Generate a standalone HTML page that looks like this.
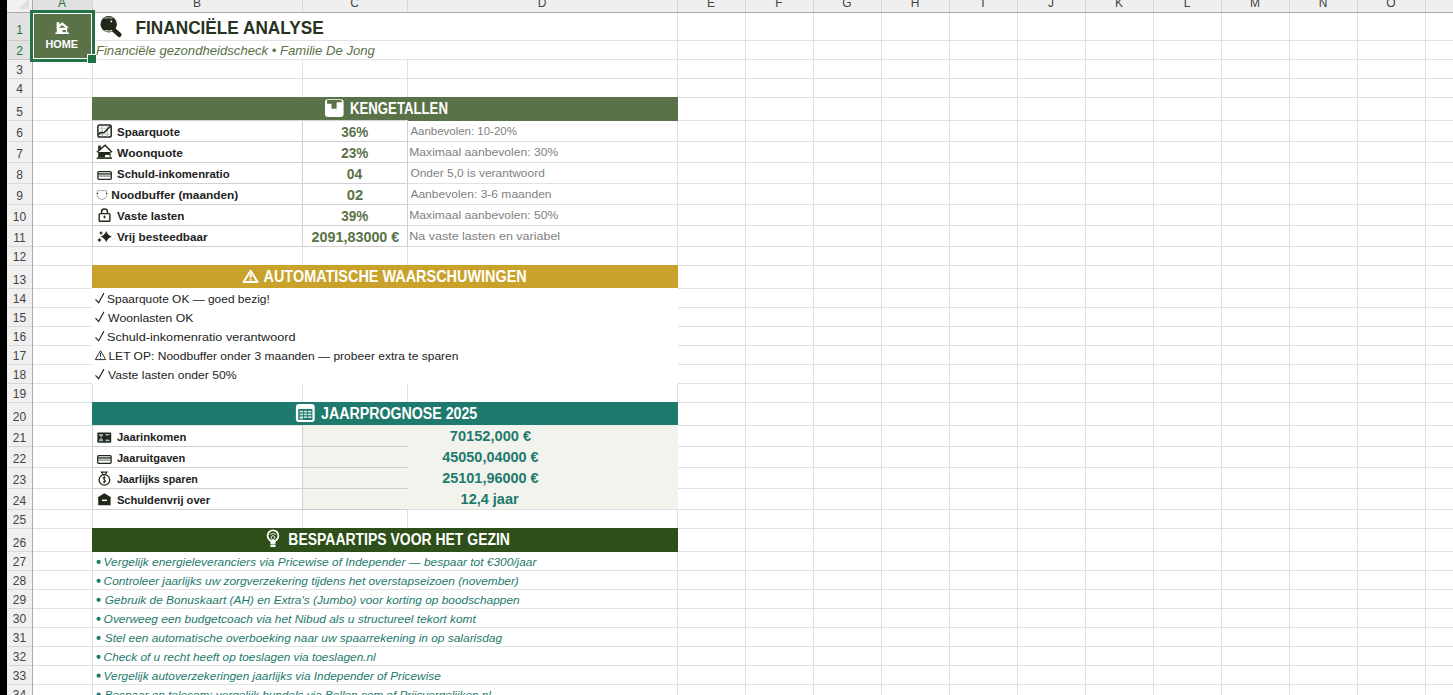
<!DOCTYPE html>
<html><head><meta charset="utf-8"><title>Financiële analyse</title>
<style>html,body{margin:0;padding:0;background:#fff;overflow:hidden}svg{display:block}</style></head>
<body><svg width="1453" height="695" viewBox="0 0 1453 695">
<g shape-rendering="crispEdges"><rect x="0" y="0" width="1453" height="695" fill="#ffffff" /><rect x="33" y="40" width="1420" height="1" fill="#e1e1e1" /><rect x="33" y="59" width="1420" height="1" fill="#e1e1e1" /><rect x="33" y="78" width="1420" height="1" fill="#e1e1e1" /><rect x="33" y="97" width="1420" height="1" fill="#e1e1e1" /><rect x="33" y="120" width="1420" height="1" fill="#e1e1e1" /><rect x="33" y="141" width="1420" height="1" fill="#e1e1e1" /><rect x="33" y="162" width="1420" height="1" fill="#e1e1e1" /><rect x="33" y="183" width="1420" height="1" fill="#e1e1e1" /><rect x="33" y="204" width="1420" height="1" fill="#e1e1e1" /><rect x="33" y="225" width="1420" height="1" fill="#e1e1e1" /><rect x="33" y="246" width="1420" height="1" fill="#e1e1e1" /><rect x="33" y="265" width="1420" height="1" fill="#e1e1e1" /><rect x="33" y="288" width="1420" height="1" fill="#e1e1e1" /><rect x="33" y="307" width="1420" height="1" fill="#e1e1e1" /><rect x="33" y="326" width="1420" height="1" fill="#e1e1e1" /><rect x="33" y="345" width="1420" height="1" fill="#e1e1e1" /><rect x="33" y="364" width="1420" height="1" fill="#e1e1e1" /><rect x="33" y="383" width="1420" height="1" fill="#e1e1e1" /><rect x="33" y="402" width="1420" height="1" fill="#e1e1e1" /><rect x="33" y="425" width="1420" height="1" fill="#e1e1e1" /><rect x="33" y="446" width="1420" height="1" fill="#e1e1e1" /><rect x="33" y="467" width="1420" height="1" fill="#e1e1e1" /><rect x="33" y="488" width="1420" height="1" fill="#e1e1e1" /><rect x="33" y="509" width="1420" height="1" fill="#e1e1e1" /><rect x="33" y="528" width="1420" height="1" fill="#e1e1e1" /><rect x="33" y="551" width="1420" height="1" fill="#e1e1e1" /><rect x="33" y="570" width="1420" height="1" fill="#e1e1e1" /><rect x="33" y="589" width="1420" height="1" fill="#e1e1e1" /><rect x="33" y="608" width="1420" height="1" fill="#e1e1e1" /><rect x="33" y="627" width="1420" height="1" fill="#e1e1e1" /><rect x="33" y="646" width="1420" height="1" fill="#e1e1e1" /><rect x="33" y="665" width="1420" height="1" fill="#e1e1e1" /><rect x="33" y="684" width="1420" height="1" fill="#e1e1e1" /><rect x="92" y="13" width="1" height="682" fill="#e1e1e1" /><rect x="302" y="13" width="1" height="682" fill="#e1e1e1" /><rect x="407" y="13" width="1" height="682" fill="#e1e1e1" /><rect x="677" y="13" width="1" height="682" fill="#e1e1e1" /><rect x="745" y="13" width="1" height="682" fill="#e1e1e1" /><rect x="813" y="13" width="1" height="682" fill="#e1e1e1" /><rect x="881" y="13" width="1" height="682" fill="#e1e1e1" /><rect x="949" y="13" width="1" height="682" fill="#e1e1e1" /><rect x="1017" y="13" width="1" height="682" fill="#e1e1e1" /><rect x="1085" y="13" width="1" height="682" fill="#e1e1e1" /><rect x="1153" y="13" width="1" height="682" fill="#e1e1e1" /><rect x="1221" y="13" width="1" height="682" fill="#e1e1e1" /><rect x="1289" y="13" width="1" height="682" fill="#e1e1e1" /><rect x="1357" y="13" width="1" height="682" fill="#e1e1e1" /><rect x="1425" y="13" width="1" height="682" fill="#e1e1e1" /><rect x="302" y="13" width="1" height="27" fill="#fff" /><rect x="302" y="41" width="1" height="18" fill="#fff" /><rect x="407" y="13" width="1" height="27" fill="#fff" /><rect x="407" y="41" width="1" height="18" fill="#fff" /><rect x="302" y="552" width="1" height="18" fill="#fff" /><rect x="407" y="552" width="1" height="18" fill="#fff" /><rect x="302" y="571" width="1" height="18" fill="#fff" /><rect x="407" y="571" width="1" height="18" fill="#fff" /><rect x="302" y="590" width="1" height="18" fill="#fff" /><rect x="407" y="590" width="1" height="18" fill="#fff" /><rect x="302" y="609" width="1" height="18" fill="#fff" /><rect x="407" y="609" width="1" height="18" fill="#fff" /><rect x="302" y="628" width="1" height="18" fill="#fff" /><rect x="407" y="628" width="1" height="18" fill="#fff" /><rect x="302" y="647" width="1" height="18" fill="#fff" /><rect x="407" y="647" width="1" height="18" fill="#fff" /><rect x="302" y="666" width="1" height="18" fill="#fff" /><rect x="407" y="666" width="1" height="18" fill="#fff" /><rect x="302" y="685" width="1" height="18" fill="#fff" /><rect x="407" y="685" width="1" height="18" fill="#fff" /><rect x="92" y="288" width="586" height="96" fill="#ffffff" /><rect x="92" y="97" width="586" height="23" fill="#5a7247" /><rect x="92" y="265" width="586" height="23" fill="#c9a22b" /><rect x="92" y="402" width="586" height="23" fill="#1e7a6d" /><rect x="92" y="528" width="586" height="24" fill="#2e4f19" /><rect x="303" y="425" width="375" height="84" fill="#f3f3ee" /><rect x="92" y="120" width="316" height="1" fill="#d0d0d0" /><rect x="92" y="141" width="316" height="1" fill="#d0d0d0" /><rect x="92" y="162" width="316" height="1" fill="#d0d0d0" /><rect x="92" y="183" width="316" height="1" fill="#d0d0d0" /><rect x="92" y="204" width="316" height="1" fill="#d0d0d0" /><rect x="92" y="225" width="316" height="1" fill="#d0d0d0" /><rect x="92" y="246" width="316" height="1" fill="#d0d0d0" /><rect x="92" y="120" width="1" height="127" fill="#d0d0d0" /><rect x="302" y="120" width="1" height="127" fill="#d0d0d0" /><rect x="407" y="120" width="1" height="127" fill="#d0d0d0" /><rect x="92" y="446" width="316" height="1" fill="#d0d0d0" /><rect x="92" y="467" width="316" height="1" fill="#d0d0d0" /><rect x="92" y="488" width="316" height="1" fill="#d0d0d0" /><rect x="92" y="509" width="316" height="1" fill="#d0d0d0" /><rect x="92" y="425" width="1" height="85" fill="#d0d0d0" /><rect x="302" y="425" width="1" height="85" fill="#d0d0d0" /><rect x="408" y="120" width="270" height="1" fill="#5a7247" /><rect x="0" y="0" width="7" height="695" fill="#000000" /><defs><linearGradient id="hg" x1="0" y1="0" x2="0" y2="1"><stop offset="0" stop-color="#e9e9e9"/><stop offset="1" stop-color="#f1f1f1"/></linearGradient></defs><rect x="7" y="0" width="1446" height="12" fill="#efefef" /><rect x="33" y="0" width="59" height="12" fill="#e1e1e1" /><rect x="7" y="12" width="1446" height="1" fill="#ababab" /><rect x="92" y="0" width="1" height="12" fill="#d6d6d6" /><rect x="302" y="0" width="1" height="12" fill="#d6d6d6" /><rect x="407" y="0" width="1" height="12" fill="#d6d6d6" /><rect x="677" y="0" width="1" height="12" fill="#d6d6d6" /><rect x="745" y="0" width="1" height="12" fill="#d6d6d6" /><rect x="813" y="0" width="1" height="12" fill="#d6d6d6" /><rect x="881" y="0" width="1" height="12" fill="#d6d6d6" /><rect x="949" y="0" width="1" height="12" fill="#d6d6d6" /><rect x="1017" y="0" width="1" height="12" fill="#d6d6d6" /><rect x="1085" y="0" width="1" height="12" fill="#d6d6d6" /><rect x="1153" y="0" width="1" height="12" fill="#d6d6d6" /><rect x="1221" y="0" width="1" height="12" fill="#d6d6d6" /><rect x="1289" y="0" width="1" height="12" fill="#d6d6d6" /><rect x="1357" y="0" width="1" height="12" fill="#d6d6d6" /><rect x="1425" y="0" width="1" height="12" fill="#d6d6d6" /><rect x="7" y="0" width="25" height="12" fill="#f0f0f0" /><polygon points="18,9 29,9 29,-2" fill="#dfdfdf"/><rect x="32" y="0" width="1" height="695" fill="#ababab" /><rect x="7" y="13" width="25" height="682" fill="#f0f0f0" /><rect x="7" y="13" width="25" height="46" fill="#e1e1e1" /><rect x="7" y="40" width="25" height="1" fill="#c9c9c9" /><rect x="7" y="59" width="25" height="1" fill="#c9c9c9" /><rect x="7" y="78" width="25" height="1" fill="#d8d8d8" /><rect x="7" y="97" width="25" height="1" fill="#d8d8d8" /><rect x="7" y="120" width="25" height="1" fill="#d8d8d8" /><rect x="7" y="141" width="25" height="1" fill="#d8d8d8" /><rect x="7" y="162" width="25" height="1" fill="#d8d8d8" /><rect x="7" y="183" width="25" height="1" fill="#d8d8d8" /><rect x="7" y="204" width="25" height="1" fill="#d8d8d8" /><rect x="7" y="225" width="25" height="1" fill="#d8d8d8" /><rect x="7" y="246" width="25" height="1" fill="#d8d8d8" /><rect x="7" y="265" width="25" height="1" fill="#d8d8d8" /><rect x="7" y="288" width="25" height="1" fill="#d8d8d8" /><rect x="7" y="307" width="25" height="1" fill="#d8d8d8" /><rect x="7" y="326" width="25" height="1" fill="#d8d8d8" /><rect x="7" y="345" width="25" height="1" fill="#d8d8d8" /><rect x="7" y="364" width="25" height="1" fill="#d8d8d8" /><rect x="7" y="383" width="25" height="1" fill="#d8d8d8" /><rect x="7" y="402" width="25" height="1" fill="#d8d8d8" /><rect x="7" y="425" width="25" height="1" fill="#d8d8d8" /><rect x="7" y="446" width="25" height="1" fill="#d8d8d8" /><rect x="7" y="467" width="25" height="1" fill="#d8d8d8" /><rect x="7" y="488" width="25" height="1" fill="#d8d8d8" /><rect x="7" y="509" width="25" height="1" fill="#d8d8d8" /><rect x="7" y="528" width="25" height="1" fill="#d8d8d8" /><rect x="7" y="551" width="25" height="1" fill="#d8d8d8" /><rect x="7" y="570" width="25" height="1" fill="#d8d8d8" /><rect x="7" y="589" width="25" height="1" fill="#d8d8d8" /><rect x="7" y="608" width="25" height="1" fill="#d8d8d8" /><rect x="7" y="627" width="25" height="1" fill="#d8d8d8" /><rect x="7" y="646" width="25" height="1" fill="#d8d8d8" /><rect x="7" y="665" width="25" height="1" fill="#d8d8d8" /><rect x="7" y="684" width="25" height="1" fill="#d8d8d8" /><rect x="34" y="14" width="57" height="44" fill="#5a7247" /><rect x="30" y="10" width="65" height="52" fill="#217346" /><rect x="33" y="13" width="59" height="46" fill="#ffffff" /><rect x="34" y="14" width="57" height="44" fill="#5a7247" /><rect x="87" y="54" width="10" height="10" fill="#ffffff" /><rect x="88" y="55" width="8" height="8" fill="#217346" /></g>
<g><text x="62.0" y="7" text-anchor="middle" font-family="Liberation Sans" font-size="12" fill="#217346">A</text><text x="197.0" y="7" text-anchor="middle" font-family="Liberation Sans" font-size="12" fill="#444444">B</text><text x="354.5" y="7" text-anchor="middle" font-family="Liberation Sans" font-size="12" fill="#444444">C</text><text x="542.0" y="7" text-anchor="middle" font-family="Liberation Sans" font-size="12" fill="#444444">D</text><text x="711.0" y="7" text-anchor="middle" font-family="Liberation Sans" font-size="12" fill="#444444">E</text><text x="779.0" y="7" text-anchor="middle" font-family="Liberation Sans" font-size="12" fill="#444444">F</text><text x="847.0" y="7" text-anchor="middle" font-family="Liberation Sans" font-size="12" fill="#444444">G</text><text x="915.0" y="7" text-anchor="middle" font-family="Liberation Sans" font-size="12" fill="#444444">H</text><text x="983.0" y="7" text-anchor="middle" font-family="Liberation Sans" font-size="12" fill="#444444">I</text><text x="1051.0" y="7" text-anchor="middle" font-family="Liberation Sans" font-size="12" fill="#444444">J</text><text x="1119.0" y="7" text-anchor="middle" font-family="Liberation Sans" font-size="12" fill="#444444">K</text><text x="1187.0" y="7" text-anchor="middle" font-family="Liberation Sans" font-size="12" fill="#444444">L</text><text x="1255.0" y="7" text-anchor="middle" font-family="Liberation Sans" font-size="12" fill="#444444">M</text><text x="1323.0" y="7" text-anchor="middle" font-family="Liberation Sans" font-size="12" fill="#444444">N</text><text x="1391.0" y="7" text-anchor="middle" font-family="Liberation Sans" font-size="12" fill="#444444">O</text><text x="1459.0" y="7" text-anchor="middle" font-family="Liberation Sans" font-size="12" fill="#444444">P</text><text x="19.5" y="34.1" text-anchor="middle" font-family="Liberation Sans" font-size="12" fill="#217346">1</text><text x="19.5" y="54.7" text-anchor="middle" font-family="Liberation Sans" font-size="12" fill="#217346">2</text><text x="19.5" y="73.7" text-anchor="middle" font-family="Liberation Sans" font-size="12" fill="#444444">3</text><text x="19.5" y="92.7" text-anchor="middle" font-family="Liberation Sans" font-size="12" fill="#444444">4</text><text x="19.5" y="115.7" text-anchor="middle" font-family="Liberation Sans" font-size="12" fill="#444444">5</text><text x="19.5" y="136.7" text-anchor="middle" font-family="Liberation Sans" font-size="12" fill="#444444">6</text><text x="19.5" y="157.7" text-anchor="middle" font-family="Liberation Sans" font-size="12" fill="#444444">7</text><text x="19.5" y="178.7" text-anchor="middle" font-family="Liberation Sans" font-size="12" fill="#444444">8</text><text x="19.5" y="199.7" text-anchor="middle" font-family="Liberation Sans" font-size="12" fill="#444444">9</text><text x="19.5" y="220.7" text-anchor="middle" font-family="Liberation Sans" font-size="12" fill="#444444">10</text><text x="19.5" y="241.7" text-anchor="middle" font-family="Liberation Sans" font-size="12" fill="#444444">11</text><text x="19.5" y="260.7" text-anchor="middle" font-family="Liberation Sans" font-size="12" fill="#444444">12</text><text x="19.5" y="283.7" text-anchor="middle" font-family="Liberation Sans" font-size="12" fill="#444444">13</text><text x="19.5" y="302.7" text-anchor="middle" font-family="Liberation Sans" font-size="12" fill="#444444">14</text><text x="19.5" y="321.7" text-anchor="middle" font-family="Liberation Sans" font-size="12" fill="#444444">15</text><text x="19.5" y="340.7" text-anchor="middle" font-family="Liberation Sans" font-size="12" fill="#444444">16</text><text x="19.5" y="359.7" text-anchor="middle" font-family="Liberation Sans" font-size="12" fill="#444444">17</text><text x="19.5" y="378.7" text-anchor="middle" font-family="Liberation Sans" font-size="12" fill="#444444">18</text><text x="19.5" y="397.7" text-anchor="middle" font-family="Liberation Sans" font-size="12" fill="#444444">19</text><text x="19.5" y="420.7" text-anchor="middle" font-family="Liberation Sans" font-size="12" fill="#444444">20</text><text x="19.5" y="441.7" text-anchor="middle" font-family="Liberation Sans" font-size="12" fill="#444444">21</text><text x="19.5" y="462.7" text-anchor="middle" font-family="Liberation Sans" font-size="12" fill="#444444">22</text><text x="19.5" y="483.7" text-anchor="middle" font-family="Liberation Sans" font-size="12" fill="#444444">23</text><text x="19.5" y="504.7" text-anchor="middle" font-family="Liberation Sans" font-size="12" fill="#444444">24</text><text x="19.5" y="523.7" text-anchor="middle" font-family="Liberation Sans" font-size="12" fill="#444444">25</text><text x="19.5" y="546.7" text-anchor="middle" font-family="Liberation Sans" font-size="12" fill="#444444">26</text><text x="19.5" y="565.7" text-anchor="middle" font-family="Liberation Sans" font-size="12" fill="#444444">27</text><text x="19.5" y="584.7" text-anchor="middle" font-family="Liberation Sans" font-size="12" fill="#444444">28</text><text x="19.5" y="603.7" text-anchor="middle" font-family="Liberation Sans" font-size="12" fill="#444444">29</text><text x="19.5" y="622.7" text-anchor="middle" font-family="Liberation Sans" font-size="12" fill="#444444">30</text><text x="19.5" y="641.7" text-anchor="middle" font-family="Liberation Sans" font-size="12" fill="#444444">31</text><text x="19.5" y="660.7" text-anchor="middle" font-family="Liberation Sans" font-size="12" fill="#444444">32</text><text x="19.5" y="679.7" text-anchor="middle" font-family="Liberation Sans" font-size="12" fill="#444444">33</text><text x="19.5" y="698.7" text-anchor="middle" font-family="Liberation Sans" font-size="12" fill="#444444">34</text><text transform="translate(135.55,33.7) scale(0.9482,1)" font-family="Liberation Sans" font-size="18.156" font-weight="bold" style="" fill="#263322" xml:space="preserve">FINANCIËLE ANALYSE</text><text transform="translate(95.90,55.4) scale(1.0818,1)" font-family="Liberation Sans" font-size="12.151" font-weight="normal" style="font-style:italic;" fill="#5a7247" xml:space="preserve">Financiële gezondheidscheck • Familie De Jong</text><text transform="translate(45.42,47.9) scale(0.9750,1)" font-family="Liberation Sans" font-size="11.173" font-weight="bold" style="" fill="#ffffff" xml:space="preserve">HOME</text><text transform="translate(349.98,114.1) scale(0.8248,1)" font-family="Liberation Sans" font-size="16.006" font-weight="bold" style="" fill="#ffffff" xml:space="preserve">KENGETALLEN</text><text transform="translate(117.10,136) scale(1.0246,1)" font-family="Liberation Sans" font-size="11.173" font-weight="bold" style="" fill="#222222" xml:space="preserve">Spaarquote</text><text transform="translate(117.10,157) scale(1.0754,1)" font-family="Liberation Sans" font-size="11.173" font-weight="bold" style="" fill="#222222" xml:space="preserve">Woonquote</text><text transform="translate(117.10,178) scale(1.0135,1)" font-family="Liberation Sans" font-size="11.173" font-weight="bold" style="" fill="#222222" xml:space="preserve">Schuld-inkomenratio</text><text transform="translate(117.10,220) scale(1.0438,1)" font-family="Liberation Sans" font-size="11.173" font-weight="bold" style="" fill="#222222" xml:space="preserve">Vaste lasten</text><text transform="translate(117.10,241) scale(1.0488,1)" font-family="Liberation Sans" font-size="11.173" font-weight="bold" style="" fill="#222222" xml:space="preserve">Vrij besteedbaar</text><text transform="translate(111.34,199) scale(1.0610,1)" font-family="Liberation Sans" font-size="11.173" font-weight="bold" style="" fill="#222222" xml:space="preserve">Noodbuffer (maanden)</text><text transform="translate(341.20,137) scale(0.9679,1)" font-family="Liberation Sans" font-size="13.994" font-weight="bold" style="" fill="#5a7247" xml:space="preserve">36%</text><text transform="translate(341.20,158) scale(0.9679,1)" font-family="Liberation Sans" font-size="13.994" font-weight="bold" style="" fill="#5a7247" xml:space="preserve">23%</text><text transform="translate(346.80,179) scale(0.9937,1)" font-family="Liberation Sans" font-size="13.994" font-weight="bold" style="" fill="#5a7247" xml:space="preserve">04</text><text transform="translate(346.80,200) scale(1.0600,1)" font-family="Liberation Sans" font-size="13.994" font-weight="bold" style="" fill="#5a7247" xml:space="preserve">02</text><text transform="translate(341.20,221) scale(0.9679,1)" font-family="Liberation Sans" font-size="13.994" font-weight="bold" style="" fill="#5a7247" xml:space="preserve">39%</text><text transform="translate(311.60,242) scale(1.0259,1)" font-family="Liberation Sans" font-size="13.994" font-weight="bold" style="" fill="#5a7247" xml:space="preserve">2091,83000 €</text><text transform="translate(410.40,135) scale(1.0680,1)" font-family="Liberation Sans" font-size="10.754" font-weight="normal" style="" fill="#7f7f7f" xml:space="preserve">Aanbevolen: 10-20%</text><text transform="translate(409.27,156) scale(1.1282,1)" font-family="Liberation Sans" font-size="10.754" font-weight="normal" style="" fill="#7f7f7f" xml:space="preserve">Maximaal aanbevolen: 30%</text><text transform="translate(410.40,177) scale(1.1142,1)" font-family="Liberation Sans" font-size="10.754" font-weight="normal" style="" fill="#7f7f7f" xml:space="preserve">Onder 5,0 is verantwoord</text><text transform="translate(410.40,198) scale(1.1198,1)" font-family="Liberation Sans" font-size="10.754" font-weight="normal" style="" fill="#7f7f7f" xml:space="preserve">Aanbevolen: 3-6 maanden</text><text transform="translate(409.27,219) scale(1.1282,1)" font-family="Liberation Sans" font-size="10.754" font-weight="normal" style="" fill="#7f7f7f" xml:space="preserve">Maximaal aanbevolen: 50%</text><text transform="translate(409.23,240) scale(1.1656,1)" font-family="Liberation Sans" font-size="10.754" font-weight="normal" style="" fill="#7f7f7f" xml:space="preserve">Na vaste lasten en variabel</text><text transform="translate(263.50,282) scale(0.9024,1)" font-family="Liberation Sans" font-size="16.006" font-weight="bold" style="" fill="#ffffff" xml:space="preserve">AUTOMATISCHE WAARSCHUWINGEN</text><text transform="translate(107.03,302.7) scale(1.0700,1)" font-family="Liberation Sans" font-size="11.173" font-weight="normal" style="" fill="#222222" xml:space="preserve">Spaarquote OK — goed bezig!</text><text transform="translate(108.10,321.5) scale(1.0923,1)" font-family="Liberation Sans" font-size="11.173" font-weight="normal" style="" fill="#222222" xml:space="preserve">Woonlasten OK</text><text transform="translate(106.97,340.8) scale(1.1339,1)" font-family="Liberation Sans" font-size="11.173" font-weight="normal" style="" fill="#222222" xml:space="preserve">Schuld-inkomenratio verantwoord</text><text transform="translate(108.42,359.9) scale(1.0774,1)" font-family="Liberation Sans" font-size="11.173" font-weight="normal" style="" fill="#222222" xml:space="preserve">LET OP: Noodbuffer onder 3 maanden — probeer extra te sparen</text><text transform="translate(108.10,378.7) scale(1.0915,1)" font-family="Liberation Sans" font-size="11.173" font-weight="normal" style="" fill="#222222" xml:space="preserve">Vaste lasten onder 50%</text><text transform="translate(321.00,418.6) scale(0.8875,1)" font-family="Liberation Sans" font-size="16.006" font-weight="bold" style="" fill="#ffffff" xml:space="preserve">JAARPROGNOSE 2025</text><text transform="translate(116.90,441) scale(1.0074,1)" font-family="Liberation Sans" font-size="11.173" font-weight="bold" style="" fill="#222222" xml:space="preserve">Jaarinkomen</text><text transform="translate(116.90,462) scale(0.9926,1)" font-family="Liberation Sans" font-size="11.173" font-weight="bold" style="" fill="#222222" xml:space="preserve">Jaaruitgaven</text><text transform="translate(116.90,483) scale(0.9607,1)" font-family="Liberation Sans" font-size="11.173" font-weight="bold" style="" fill="#222222" xml:space="preserve">Jaarlijks sparen</text><text transform="translate(116.90,504) scale(0.9957,1)" font-family="Liberation Sans" font-size="11.173" font-weight="bold" style="" fill="#222222" xml:space="preserve">Schuldenvrij over</text><text transform="translate(449.75,441) scale(1.0461,1)" font-family="Liberation Sans" font-size="13.994" font-weight="bold" style="" fill="#1d7a6d" xml:space="preserve">70152,000 €</text><text transform="translate(442.20,462) scale(1.0333,1)" font-family="Liberation Sans" font-size="13.994" font-weight="bold" style="" fill="#1d7a6d" xml:space="preserve">45050,04000 €</text><text transform="translate(442.20,483) scale(1.0333,1)" font-family="Liberation Sans" font-size="13.994" font-weight="bold" style="" fill="#1d7a6d" xml:space="preserve">25101,96000 €</text><text transform="translate(460.56,504) scale(1.0382,1)" font-family="Liberation Sans" font-size="13.994" font-weight="bold" style="" fill="#1d7a6d" xml:space="preserve">12,4 jaar</text><text transform="translate(288.33,545) scale(0.8726,1)" font-family="Liberation Sans" font-size="16.006" font-weight="bold" style="" fill="#ffffff" xml:space="preserve">BESPAARTIPS VOOR HET GEZIN</text><text transform="translate(103.61,565.7) scale(1.0927,1)" font-family="Liberation Sans" font-size="10.894" font-weight="normal" style="font-style:italic;" fill="#1d7a6d" xml:space="preserve">Vergelijk energieleveranciers via Pricewise of Independer — bespaar tot €300/jaar</text><text transform="translate(103.61,584.6) scale(1.0905,1)" font-family="Liberation Sans" font-size="10.894" font-weight="normal" style="font-style:italic;" fill="#1d7a6d" xml:space="preserve">Controleer jaarlijks uw zorgverzekering tijdens het overstapseizoen (november)</text><text transform="translate(104.70,603.6) scale(1.0918,1)" font-family="Liberation Sans" font-size="10.894" font-weight="normal" style="font-style:italic;" fill="#1d7a6d" xml:space="preserve">Gebruik de Bonuskaart (AH) en Extra&#39;s (Jumbo) voor korting op boodschappen</text><text transform="translate(103.60,622.6) scale(1.0970,1)" font-family="Liberation Sans" font-size="10.894" font-weight="normal" style="font-style:italic;" fill="#1d7a6d" xml:space="preserve">Overweeg een budgetcoach via het Nibud als u structureel tekort komt</text><text transform="translate(104.70,641.7) scale(1.0956,1)" font-family="Liberation Sans" font-size="10.894" font-weight="normal" style="font-style:italic;" fill="#1d7a6d" xml:space="preserve">Stel een automatische overboeking naar uw spaarrekening in op salarisdag</text><text transform="translate(103.61,660.6) scale(1.0872,1)" font-family="Liberation Sans" font-size="10.894" font-weight="normal" style="font-style:italic;" fill="#1d7a6d" xml:space="preserve">Check of u recht heeft op toeslagen via toeslagen.nl</text><text transform="translate(103.61,679.5) scale(1.0874,1)" font-family="Liberation Sans" font-size="10.894" font-weight="normal" style="font-style:italic;" fill="#1d7a6d" xml:space="preserve">Vergelijk autoverzekeringen jaarlijks via Independer of Pricewise</text><text transform="translate(104.70,698.5) scale(1.0804,1)" font-family="Liberation Sans" font-size="10.894" font-weight="normal" style="font-style:italic;" fill="#1d7a6d" xml:space="preserve">Bespaar op telecom: vergelijk bundels via Bellen.com of Prijsvergelijken.nl</text></g>
<g><circle cx="108.7" cy="24.2" r="8.2" fill="#1f2819"/><line x1="113.5" y1="29.6" x2="119.3" y2="34.8" stroke="#1f2819" stroke-width="4.6" stroke-linecap="round"/><path d="M104.5 18.2 Q108.5 17.3 112.5 18.2" stroke="#d8dcd2" stroke-width="0.9" fill="none"/><path d="M104.8 30.6 Q108.5 31.4 112.2 30.6" stroke="#e8ebe4" stroke-width="1.1" fill="none"/><rect x="110.5" y="20.5" width="1.6" height="1.8" fill="#f4f6ff"/><path d="M55.3 27.8 L62.3 22.2 L69 27.8 L67.2 27.8 L67.2 32.4 L69 32.4 L69 33.9 L55.3 33.9 L55.3 32.4 L56.8 32.4 L56.8 27.8 Z" fill="#fff"/><rect x="56.6" y="22.2" width="2.8" height="4" fill="#fff"/><path d="M58.8 27.7 L62.1 25.0 L65.4 27.7 Z" fill="#5a7247"/><rect x="62.6" y="30.0" width="3.2" height="2.1" fill="#5a7247"/><rect x="325" y="99.2" width="18.6" height="17.8" rx="3" fill="#fff"/><path d="M327.1 100.1 H340.6 L342.1 101.5 L341.6 102.2 H336.6 V108.7 H331.5 V103.8 H327.1 Z" fill="#5a7247"/><path d="M250.6 270.8 L257.6 282 L243.6 282 Z" fill="none" stroke="#fff" stroke-width="2" stroke-linejoin="round"/><rect x="249.6" y="273.6" width="2" height="4.2" fill="#fff"/><rect x="249.6" y="278.8" width="2" height="1.8" fill="#fff"/><rect x="295.9" y="404.1" width="18.8" height="17.9" rx="3" fill="#fff"/><rect x="298.2" y="409" width="14.2" height="11" fill="#1e7a6d"/><rect x="299.6" y="410.8" width="3.4" height="1.6" fill="#cfe3df"/><rect x="303.8" y="410.8" width="3.2" height="1.6" fill="#cfe3df"/><rect x="307.8" y="410.8" width="3.6" height="1.6" fill="#cfe3df"/><rect x="299.6" y="413.6" width="3.4" height="1.6" fill="#cfe3df"/><rect x="303.8" y="413.6" width="3.2" height="1.6" fill="#cfe3df"/><rect x="307.8" y="413.6" width="3.6" height="1.6" fill="#cfe3df"/><rect x="299.6" y="416.4" width="3.4" height="1.6" fill="#cfe3df"/><rect x="303.8" y="416.4" width="3.2" height="1.6" fill="#cfe3df"/><rect x="307.8" y="416.4" width="3.6" height="1.6" fill="#cfe3df"/><rect x="299.6" y="418.4" width="3.4" height="1.0" fill="#cfe3df"/><circle cx="273" cy="535.8" r="5.4" fill="none" stroke="#fff" stroke-width="1.8"/><path d="M270.3 540 L270.6 544 H275.4 L275.7 540 Z" fill="#fff"/><rect x="270.4" y="544.6" width="5.2" height="2.4" rx="0.8" fill="#fff"/><circle cx="273" cy="537.6" r="1.9" fill="none" stroke="#fff" stroke-width="0.9"/><path d="M269.8 534.4 Q273 532.6 276.2 534.4" stroke="#fff" stroke-width="0.8" fill="none"/><g><rect x="97.9" y="125.1" width="13.3" height="12" rx="1.8" fill="#fff" stroke="#1f2819" stroke-width="1.5"/><line x1="102.1" y1="125.8" x2="102.1" y2="136.4" stroke="#a8a8bc" stroke-width="1.1"/><line x1="107.2" y1="125.8" x2="107.2" y2="136.4" stroke="#a8a8bc" stroke-width="1.1"/><line x1="98.6" y1="128.3" x2="110.5" y2="128.3" stroke="#c4c4c4" stroke-width="0.8"/><line x1="98.6" y1="134.5" x2="110.5" y2="134.5" stroke="#c4c4c4" stroke-width="0.8"/><path d="M98.4 134.6 L100.4 132.6 L104 132.8 L110.6 126" stroke="#1f2819" stroke-width="1.5" fill="none"/></g><path d="M96.8 152.3 L105.1 145.3 L112 152.3" stroke="#1f2819" stroke-width="1.5" fill="none"/><rect x="98.2" y="145.6" width="2.6" height="4.6" fill="#1f2819"/><path d="M98.2 152 H110.6 V157.5 H98.2 Z" fill="#1f2819"/><rect x="105" y="154.9" width="4.6" height="2.7" fill="#fff"/><rect x="96.8" y="157.4" width="15.2" height="1.5" fill="#1f2819"/><rect x="97.9" y="171.6" width="13.4" height="7.7" rx="1" fill="#fff" stroke="#1f2819" stroke-width="1.3"/><rect x="97.9" y="173.3" width="13.4" height="1.3" fill="#1f2819"/><rect x="98.6" y="175.6" width="12" height="0.9" fill="#555"/><path d="M97.3 191 Q99.5 189.8 101.9 190.8 Q104.4 189.8 106.7 191 V195.5 Q106 199.2 101.9 199.6 Q97.9 199.2 97.3 195.5 Z" fill="none" stroke="#9aa09a" stroke-width="0.9"/><circle cx="97.4" cy="193.4" r="0.7" fill="#333"/><circle cx="106.6" cy="193.4" r="0.7" fill="#333"/><path d="M101.6 213.4 V211.2 Q101.6 209 104.5 209 Q107.4 209 107.4 211.2 V213.4" stroke="#1f2819" stroke-width="1.4" fill="none"/><rect x="99.2" y="213.6" width="10.7" height="7.6" rx="0.8" fill="#fff" stroke="#1f2819" stroke-width="1.4"/><rect x="103.6" y="215.6" width="1.8" height="2.8" rx="0.8" fill="#1f2819"/><path d="M106.2 231.0 Q107.7 235.1 111.8 236.6 Q107.7 238.1 106.2 242.2 Q104.7 238.1 100.60000000000001 236.6 Q104.7 235.1 106.2 231.0 Z M101.0 231.1 Q101.5 232.5 102.9 233.0 Q101.5 233.5 101.0 234.9 Q100.5 233.5 99.1 233.0 Q100.5 232.5 101.0 231.1 Z M99.4 237.7 Q100.0 239.4 101.7 240.0 Q100.0 240.6 99.4 242.3 Q98.80000000000001 240.6 97.10000000000001 240.0 Q98.80000000000001 239.4 99.4 237.7 Z" fill="#1f2819"/><rect x="97.4" y="432.5" width="13.8" height="10.2" rx="0.8" fill="#1f2819"/><path d="M99 433.9 L103.2 433.9 L103.2 435.2 L101.1 437.6 L103.2 440 L103.2 441.3 L99 441.3 L99 440 L101.1 437.6 L99 435.2 Z" fill="#9aa4b0"/><path d="M105.5 433.9 H109.7 V435 L108.2 435.6 H105.5 Z M105.5 441.3 H109.7 V440.2 L108.2 439.6 H105.5 Z" fill="#a8b0b8"/><rect x="97.7" y="455.6" width="13.4" height="7.7" rx="1" fill="#fff" stroke="#1f2819" stroke-width="1.3"/><rect x="97.7" y="457.3" width="13.4" height="1.3" fill="#1f2819"/><rect x="98.4" y="459.6" width="12" height="0.9" fill="#555"/><path d="M101.5 472.2 L106.8 472.2 L105.4 474.6 L102.9 474.6 Z" fill="none" stroke="#1f2819" stroke-width="1.2"/><circle cx="104.4" cy="479.9" r="5.3" fill="none" stroke="#1f2819" stroke-width="1.3"/><path d="M105.6 477.4 Q104.3 476.6 103.2 477.6 Q102.8 479 104.4 479.6 Q106 480.3 105.4 481.8 Q104.2 482.8 103 481.8 M104.3 476.2 V483.2" stroke="#1f2819" stroke-width="1" fill="none"/><path d="M97.4 497.5 L104.4 493.2 L111.4 497.5 L110.6 497.5 L110.6 505.2 L98.2 505.2 L98.2 497.5 Z" fill="#1f2819"/><rect x="102" y="499.6" width="5" height="1.5" fill="#fff"/><path d="M95.5 299.3 L98.6 302.7 L103.9 293.1" stroke="#262626" stroke-width="1.15" fill="none"/><path d="M95.5 318.1 L98.6 321.5 L103.9 311.9" stroke="#262626" stroke-width="1.15" fill="none"/><path d="M95.5 337.4 L98.6 340.8 L103.9 331.2" stroke="#262626" stroke-width="1.15" fill="none"/><path d="M95.5 375.3 L98.6 378.7 L103.9 369.1" stroke="#262626" stroke-width="1.15" fill="none"/><path d="M100.5 350.7 L105.7 359.6 L95.3 359.6 Z" fill="none" stroke="#333" stroke-width="1"/><rect x="100" y="352.8" width="1" height="4.2" fill="#333"/><rect x="100" y="358" width="1" height="0.9" fill="#333"/><circle cx="98.6" cy="561.9" r="2.1" fill="#1d7a6d"/><circle cx="98.6" cy="580.8" r="2.1" fill="#1d7a6d"/><circle cx="98.6" cy="599.8" r="2.1" fill="#1d7a6d"/><circle cx="98.6" cy="618.8" r="2.1" fill="#1d7a6d"/><circle cx="98.6" cy="637.9" r="2.1" fill="#1d7a6d"/><circle cx="98.6" cy="656.8" r="2.1" fill="#1d7a6d"/><circle cx="98.6" cy="675.7" r="2.1" fill="#1d7a6d"/><circle cx="98.6" cy="694.7" r="2.1" fill="#1d7a6d"/></g>
</svg></body></html>
